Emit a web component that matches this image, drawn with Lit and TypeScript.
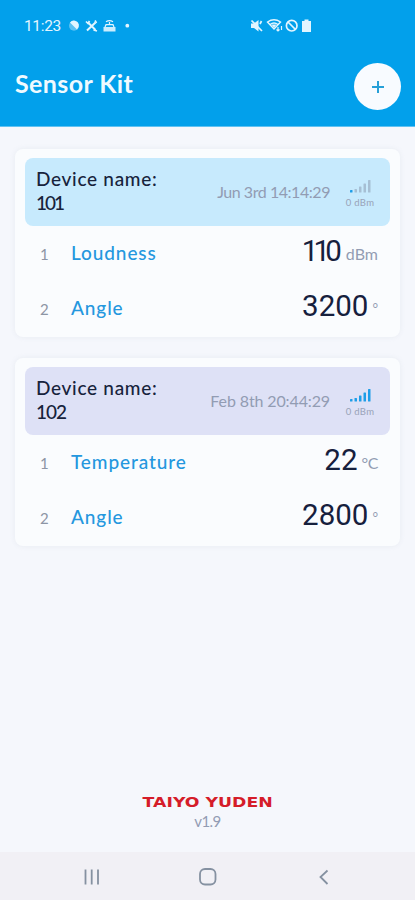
import { LitElement, html, css, svg } from "lit";
import { customElement, property } from "lit/decorators.js";

interface Reading { name: string; value: string; unit: string; tight?: boolean; }
interface Device { name: string; time: string; level: number; tone: string; readings: Reading[]; }

const devices: Device[] = [
  { name: "101", time: "Jun 3rd 14:14:29", level: 1, tone: "sky", readings: [
    { name: "Loudness", value: "110", unit: "dBm", tight: true },
    { name: "Angle", value: "3200", unit: "°" } ] },
  { name: "102", time: "Feb 8th 20:44:29", level: 5, tone: "lilac", readings: [
    { name: "Temperature", value: "22", unit: "°C" },
    { name: "Angle", value: "2800", unit: "°" } ] },
];

@customElement("status-bar")
class StatusBar extends LitElement {
  static styles = css`
    :host { display: flex; align-items: center; height: 52px; padding-left: 24px; box-sizing: border-box; color: #e2f5ff; font: 15.5px Roboto, sans-serif; }
    .clock { width: 43px; letter-spacing: -0.35px; }
    svg { display: block; flex: none; fill: none; stroke: currentColor; }
    .right { margin-left: 116px; }
  `;
  render() {
    return html`
      <span class="clock">11:23</span>
      <svg width="66" height="20" viewBox="67 16 66 20">
        <circle cx="74" cy="25.800" r="5" fill="currentColor" stroke="none" opacity=".4"/>
        <path d="M70 22.500a5 5 0 0 1 8.800 2q.500 3-1.800 5z" fill="currentColor" stroke="none"/>
        <path d="m88 22.500 7.500 7.500m0-7.500-8.500 8" stroke-width="2"/>
        <path d="M86 21.500 88 23.500l1.500-2.500M93.500 30l3.500 1M95 20.500l1.500 2.500" stroke-width="1.700"/>
        <path d="M103.500 27h12v4.500h-12z" fill="currentColor" stroke="none" opacity=".9"/>
        <path d="M105 27l1-2.300h7l1 2.300M106 21.800q3.500-2.500 7 0M109.500 22v2.500" stroke-width="1.200"/>
        <circle cx="127.300" cy="25.700" r="1.900" fill="currentColor" stroke="none"/>
      </svg>
      <svg class="right" width="66" height="20" viewBox="249 16 66 20">
        <path d="M251 23.500h3l4.500-3.500v11.500l-4.500-3.500h-3z" fill="currentColor" stroke="none"/>
        <path d="m251.500 20.500 10.500 10.500M260 24l1.500-3" stroke-width="1.700"/>
        <path d="M267.500 22q6.500-4.500 13 0l-6.500 7zM270 24.500q4-3 8 0" stroke-width="1.400"/>
        <path d="M274 28l-2.500-3.500h5z" fill="currentColor" stroke="none"/>
        <path d="M278 31v-4m-1.500 2.500 1.500 1.500 1.500-1.500M281.500 30v-4" stroke-width="1.200"/>
        <circle cx="291.700" cy="25.700" r="5.300" stroke-width="1.700"/><path d="m288 22 7.500 7.500" stroke-width="1.700"/>
        <path d="M304.500 19.500h4v1.500h2.500v11h-9V21h2.500z" fill="currentColor" stroke="none"/>
      </svg>`;
  }
}

@customElement("signal-level")
class SignalLevel extends LitElement {
  @property({ type: Number }) level = 0;
  static styles = css`
    :host { display: flex; flex-direction: column; align-items: center; width: 30px; margin-top: 3px; color: #99a3b8; font: 9.5px/12px Lato, sans-serif; letter-spacing: .3px; white-space: nowrap; }
    svg { display: block; margin-bottom: 4px; }
    .on { fill: #1e9ee8; } .off { fill: #a6bfd4; }
  `;
  render() {
    const bars = [2.5, 3.5, 6, 9, 12.5];
    return html`<svg width="22" height="14">${bars.map((h, i) =>
      svg`<rect class=${i < this.level ? "on" : "off"} x=${1 + i * 4.5} y=${13.5 - h} width="2.5" height=${h} rx=".6"/>`)}</svg>
      <span>0 dBm</span>`;
  }
}

@customElement("device-card")
class DeviceCard extends LitElement {
  @property({ attribute: false }) device!: Device;
  static styles = css`
    :host { display: block; box-sizing: border-box; height: 188px; padding: 9px 10px; border-radius: 8px; background: #fafcfe; box-shadow: 0 0 5px #dfe4ec99; }
    .head { display: flex; align-items: center; height: 68px; box-sizing: border-box; padding: 0 15px 0 11px; border-radius: 8px; }
    .sky { background: #c7eafd; } .lilac { background: #dee1f6; }
    .name { flex: 1; margin-top: -2px; color: #17233c; font: 500 19px/24px Lato, sans-serif; letter-spacing: .7px; }
    .id { letter-spacing: -1px; }
    .sky .id { letter-spacing: -2px; }
    .time { margin-right: 15px; color: #929cb3; font: 16px/20px Lato, sans-serif; white-space: nowrap; letter-spacing: -.12px; }
    .sky .time { letter-spacing: -.45px; }
    .row { display: flex; align-items: baseline; height: 55px; padding: 0 12px 0 15px; line-height: 50px; box-sizing: border-box; }
    .num { width: 31px; color: #8d95a5; font-size: 15px; font-family: Lato, sans-serif; }
    .num, .label, .unit { position: relative; top: -1.5px; }
    .label { flex: 1; color: #2497de; font-family: Lato, sans-serif; font-size: 19px; font-weight: 500; letter-spacing: .9px; }
    .value { color: #16203d; font-family: Roboto, sans-serif; font-size: 29.5px; }
    .tight { letter-spacing: -4.8px; margin-right: 4.800px; }
    .unit { margin-left: 4px; color: #929cb3; font: 16px Lato, sans-serif; }
    .degree { font-size: 13.5px; top: -3px; }
    .celsius { letter-spacing: -.4px; }
  `;
  render() {
    const d = this.device;
    const unitClass = (u: string) => u === "°" ? "degree" : u === "°C" ? "celsius" : "";
    return html`
      <div class="head ${d.tone}">
        <div class="name">Device name:<br><span class="id">${d.name}</span></div>
        <div class="time">${d.time}</div>
        <signal-level .level=${d.level}></signal-level>
      </div>
      ${d.readings.map((r, i) => html`<div class="row">
        <span class="num">${i + 1}</span><span class="label">${r.name}</span>
        <span class="value ${r.tight ? "tight" : ""}">${r.value}</span><span class="unit ${unitClass(r.unit)}">${r.unit}</span>
      </div>`)}`;
  }
}

@customElement("app-root")
class AppRoot extends LitElement {
  static styles = css`
    :host { display: flex; flex-direction: column; height: 900px; background: #f5f7fc; font-family: Lato, sans-serif; }
    header { height: 127px; box-sizing: border-box; background: #02a0eb; border-bottom: 1px solid #60c2f2; }
    .title { display: flex; justify-content: space-between; align-items: center; height: 69px; padding: 0 14px 0 15px; }
    h1 { margin: -7px 0 0; color: #f0faff; font: 700 25px/32px Lato, sans-serif; letter-spacing: .4px; }
    .add { width: 47px; height: 47px; padding: 0; border: 0; border-radius: 50%; background: #f8fbff; }
    .add svg { display: block; margin: auto; }
    main { display: flex; flex-direction: column; gap: 21px; padding: 22px 15px 0; flex: 1; }
    footer { display: flex; flex-direction: column; align-items: center; height: 58px; color: #929cb3; }
    .brand { color: #d51c29; font: 700 14px/16px "DejaVu Sans", sans-serif; transform: scaleX(1.235); }
    .version { font-size: 15px; line-height: 22px; letter-spacing: -.6px; }
    nav { height: 48px; background: #f1f0f5; }
    nav svg { display: block; fill: none; stroke: #8591a1; stroke-width: 1.8; }
  `;
  render() {
    return html`
      <header><status-bar></status-bar>
        <div class="title"><h1>Sensor Kit</h1>
          <button class="add" aria-label="Add"><svg width="14" height="14"><path d="M7 1v12M1 7h12" stroke="#27a0d8" stroke-width="2"/></svg></button>
        </div></header>
      <main>${devices.map(d => html`<device-card .device=${d}></device-card>`)}</main>
      <footer><span class="brand">TAIYO YUDEN</span><span class="version">v1.9</span></footer>
      <nav><svg width="415" height="48"><path d="M85.500 17.500v15M91.700 17.500v15M98 17.500v15M327.500 18.500l-7 6.500 7 7"/><rect x="200" y="17" width="15.500" height="15.500" rx="5"/></svg></nav>`;
  }
}
